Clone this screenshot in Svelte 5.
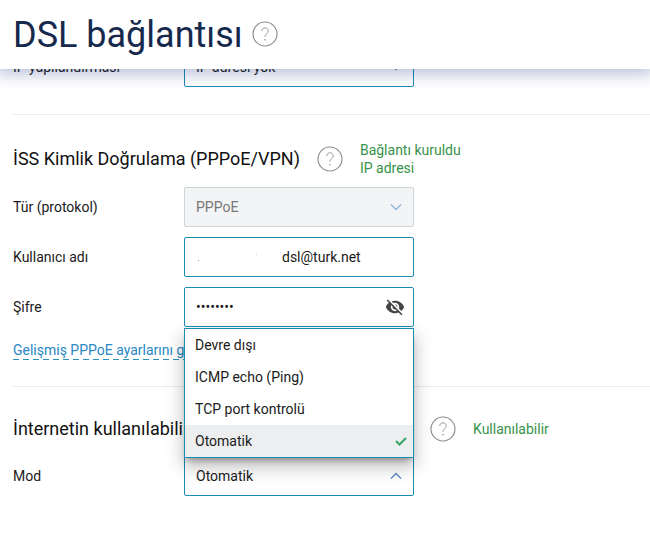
<script>
  let ipMode = $state("none");
  let protocol = $state("pppoe");
  let userName = $state("dsl@turk.net");
  let password = $state("internet");
  let showPassword = $state(false);
  let checkMode = $state("auto");
  let isMenuOpen = $state(true);

  const checkModes = [
    { value: "off", label: "Devre dışı" },
    { value: "icmp", label: "ICMP echo (Ping)" },
    { value: "tcp", label: "TCP port kontrolü" },
    { value: "auto", label: "Otomatik" },
  ];

  function toggleMenu(event) {
    event.preventDefault();
    isMenuOpen = !isMenuOpen;
  }

  function pickMode(value) {
    checkMode = value;
    isMenuOpen = false;
  }
</script>

{#snippet help()}
  <button class="help" type="button" aria-label="Yardım">
    <svg width="26" height="26" viewBox="0 0 26 26" fill="none" stroke="#8c8c8c">
      <circle cx="13" cy="13" r="12" stroke-width="1.1" />
      <path d="M9.8 10C9.8 8 11 6.800 13 6.800s3.200 1.200 3.200 3c0 1.500-.8 2.200-1.700 3-1 .9-1.500 1.500-1.500 3" stroke-width=".9" />
      <circle cx="13" cy="18.700" r=".8" fill="#8c8c8c" stroke="none" />
    </svg>
  </button>
{/snippet}

{#snippet arrow()}
  <svg class="arrow" width="12" height="8" viewBox="0 0 12 8" fill="none">
    <path d="M1 1.500l5 5 5-5" stroke="currentColor" stroke-width="1.500" />
  </svg>
{/snippet}

<header>
  <h1>DSL bağlantısı</h1>
  {@render help()}
</header>

<main>
  <div class="row">
    <label for="ip-mode">IP yapılandırması</label>
    <div class="field">
      <select id="ip-mode" bind:value={ipMode}>
        <option value="none">IP adresi yok</option>
        <option value="auto">Otomatik</option>
      </select>
      {@render arrow()}
    </div>
  </div>

  <section>
    <div class="section-head">
      <h2>İSS Kimlik Doğrulama (PPPoE/VPN)</h2>
      {@render help()}
      <p class="status">Bağlantı kuruldu<br />IP adresi</p>
    </div>
    <div class="row">
      <label for="protocol">Tür (protokol)</label>
      <div class="field disabled">
        <select id="protocol" bind:value={protocol} disabled>
          <option value="pppoe">PPPoE</option>
        </select>
        {@render arrow()}
      </div>
    </div>
    <div class="row">
      <label for="user">Kullanıcı adı</label>
      <div class="field">
        <svg class="specks" width="86" height="16" viewBox="0 0 86 16" fill="#999">
          <rect x="2" y="11" width="1" height="1" />
          <rect x="60" y="5" width="1" height="1" fill="#ccc" />
        </svg>
        <input id="user" type="text" bind:value={userName} />
      </div>
    </div>
    <div class="row">
      <label for="password">Şifre</label>
      <div class="field">
        {#if showPassword}
          <input id="password" type="text" bind:value={password} />
        {:else}
          <input id="password" type="password" bind:value={password} />
        {/if}
        <button
          class="eye"
          type="button"
          aria-label="Şifreyi göster"
          onclick={() => (showPassword = !showPassword)}
        >
          <svg width="20" height="20" viewBox="0 0 24 24" fill="#444">
            <path d="M12 7c2.760 0 5 2.240 5 5 0 .65-.13 1.260-.36 1.830l2.920 2.920c1.510-1.260 2.700-2.890 3.430-4.750-1.730-4.390-6-7.500-11-7.500-1.400 0-2.740.25-3.980.7l2.160 2.160C10.740 7.130 11.350 7 12 7zM2 4.270l2.280 2.280.46.46C3.080 8.300 1.780 10.020 1 12c1.730 4.390 6 7.500 11 7.500 1.550 0 3.030-.3 4.380-.84l.42.42L19.730 22 21 20.730 3.270 3 2 4.270zM7.530 9.800l1.550 1.550c-.05.21-.08.43-.08.65 0 1.660 1.340 3 3 3 .22 0 .44-.03.65-.08l1.550 1.550c-.67.33-1.410.53-2.200.53-2.760 0-5-2.240-5-5 0-.79.2-1.530.53-2.200zm4.310-.78l3.150 3.150.02-.16c0-1.660-1.340-3-3-3l-.17.01z" />
          </svg>
        </button>
      </div>
    </div>
    <a class="more" href="#advanced">Gelişmiş PPPoE ayarlarını göster</a>
  </section>

  <section>
    <div class="section-head">
      <h2 class="wide">İnternetin kullanılabilirliğini kontrol et</h2>
      {@render help()}
      <p class="status">Kullanılabilir</p>
    </div>
    <div class="row">
      <label for="check-mode">Mod</label>
      <div class="field" class:open={isMenuOpen}>
        <select id="check-mode" bind:value={checkMode} onmousedown={toggleMenu}>
          {#each checkModes as mode}
            <option value={mode.value}>{mode.label}</option>
          {/each}
        </select>
        {@render arrow()}
        {#if isMenuOpen}
          <div class="menu" role="listbox" aria-label="Mod">
            {#each checkModes as mode}
              <button
                type="button"
                role="option"
                aria-selected={mode.value === checkMode}
                class:selected={mode.value === checkMode}
                onclick={() => pickMode(mode.value)}
              >
                {mode.label}
                {#if mode.value === checkMode}
                  <svg width="12" height="10" viewBox="0 0 12 10" fill="none">
                    <path d="M1 5l3.500 3.500L11 2" stroke="#36a566" stroke-width="2" />
                  </svg>
                {/if}
              </button>
            {/each}
          </div>
        {/if}
      </div>
    </div>
  </section>
</main>

<style>
  :global(body) {
    background: #fff;
    color: #1a1a1a;
    font: 14px/18px Roboto, "Liberation Sans", sans-serif;
  }

  header {
    position: sticky;
    top: 0;
    z-index: 10;
    display: flex;
    align-items: center;
    gap: 9px;
    height: 69px;
    padding: 0 13px;
    box-sizing: border-box;
    background: #fff;
    box-shadow: 0 0 16px 4px rgba(20, 40, 120, 0.32);
  }

  h1 {
    margin: 0;
    color: #16294d;
    font-size: 36px;
    font-weight: 400;
    line-height: 44px;
  }

  header .help {
    margin-bottom: 2px;
  }

  /* content is scrolled a little under the sticky header */
  main {
    margin-top: -22px;
    padding: 0 0 40px 13px;
  }

  section {
    margin-top: 27px;
    padding-top: 26px;
    border-top: 1px solid #ebebeb;
  }

  section + section {
    margin-top: 26px;
    padding-top: 25px;
  }

  .section-head {
    display: flex;
    align-items: center;
    gap: 17px;
    min-height: 34px;
    margin-bottom: 10px;
  }

  h2 {
    margin: 0;
    color: #111;
    font-size: 18px;
    font-weight: 400;
    line-height: 24px;
    white-space: nowrap;
  }

  h2.wide {
    min-width: 400px;
  }

  .status {
    margin: 0;
    color: #37934a;
  }

  .help {
    display: flex;
    padding: 0;
    border: none;
    background: none;
    cursor: pointer;
  }

  .row {
    display: flex;
    align-items: center;
  }

  .row + .row {
    margin-top: 10px;
  }

  .row label {
    width: 171px;
  }

  .field {
    position: relative;
    display: flex;
    align-items: center;
    width: 230px;
    height: 40px;
    padding: 0 11px;
    box-sizing: border-box;
    border: 1px solid #1a8cb8;
    border-radius: 2px;
    background: #fff;
  }

  .field.disabled {
    border-color: #cfd4d6;
    background: #f3f4f6;
  }

  .field select,
  .field input {
    flex: 1;
    min-width: 0;
    height: 100%;
    padding: 0;
    border: none;
    outline: none;
    appearance: none;
    background: none;
    color: inherit;
    font: inherit;
  }

  .disabled select {
    color: #777;
    opacity: 1;
  }

  .arrow {
    color: #5f8fc4;
    pointer-events: none;
  }

  .disabled .arrow {
    color: #93b4dc;
  }

  .open .arrow {
    transform: rotate(180deg);
  }

  .specks {
    flex: none;
  }

  .eye {
    display: flex;
    margin-right: -3px;
    padding: 0;
    border: none;
    background: none;
    cursor: pointer;
  }

  .more {
    display: inline-block;
    margin-top: 14px;
    padding-bottom: 1px;
    background: repeating-linear-gradient(90deg, #2a93bd 0 6px, transparent 6px 10px) bottom / 100% 1px no-repeat;
    color: #2a87c4;
    text-decoration: none;
  }

  .menu {
    position: absolute;
    right: -1px;
    bottom: 37px;
    left: -1px;
    z-index: 5;
    border: 1px solid #1a8cb8;
    background: #fff;
    box-shadow:
      0 5px 6px -3px rgba(0, 0, 0, 0.3),
      0 8px 16px 1px rgba(0, 0, 0, 0.25);
  }

  .menu button {
    display: flex;
    align-items: center;
    justify-content: space-between;
    width: 100%;
    height: 32px;
    padding: 0 6px 0 10px;
    border: none;
    background: none;
    color: inherit;
    font: inherit;
    text-align: left;
    cursor: pointer;
  }

  .menu button:hover,
  .menu button.selected {
    background: #edeef0;
  }
</style>
